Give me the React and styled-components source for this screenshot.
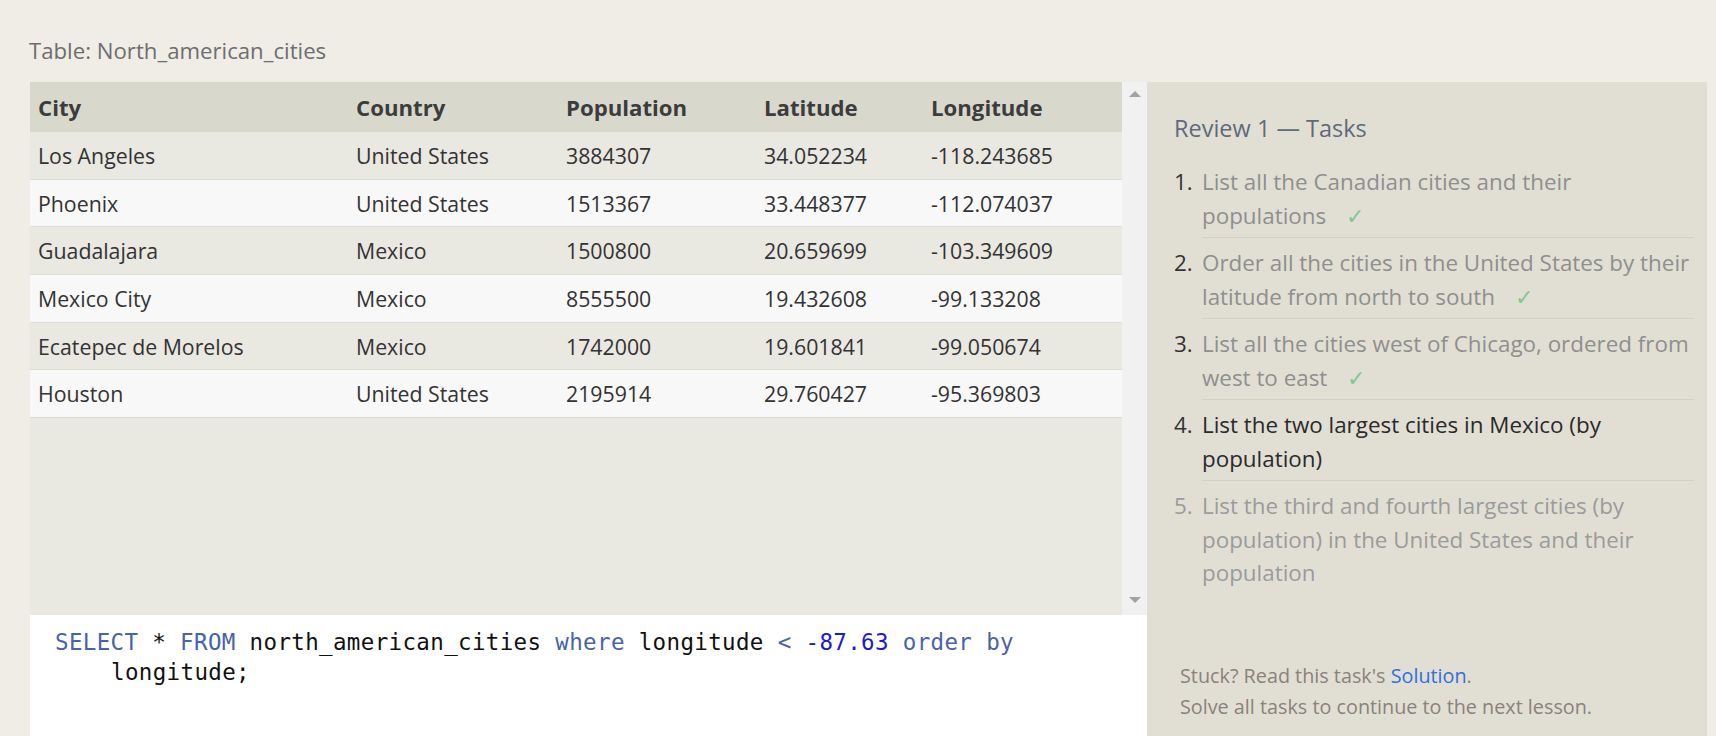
import React from "react";
import styled, { createGlobalStyle } from "styled-components";

const rows = [
  ["Los Angeles", "United States", "3884307", "34.052234", "-118.243685"],
  ["Phoenix", "United States", "1513367", "33.448377", "-112.074037"],
  ["Guadalajara", "Mexico", "1500800", "20.659699", "-103.349609"],
  ["Mexico City", "Mexico", "8555500", "19.432608", "-99.133208"],
  ["Ecatepec de Morelos", "Mexico", "1742000", "19.601841", "-99.050674"],
  ["Houston", "United States", "2195914", "29.760427", "-95.369803"],
];

const columns = ["City", "Country", "Population", "Latitude", "Longitude"];

// state: done, active, todo
const tasks = [
  { text: "List all the Canadian cities and their populations", state: "done" },
  {
    text: "Order all the cities in the United States by their latitude from north to south",
    state: "done",
  },
  {
    text: "List all the cities west of Chicago, ordered from west to east",
    state: "done",
  },
  { text: "List the two largest cities in Mexico (by population)", state: "active" },
  {
    text: "List the third and fourth largest cities (by population) in the United States and their population",
    state: "todo",
  },
];

function App() {
  return (
    <>
      <GlobalStyle />
      <Page>
        <TableTitle>Table: North_american_cities</TableTitle>
        <Workspace>
          <LeftColumn>
            <ResultsPane>
              <Results>
                <HeaderRow>
                  {columns.map((c) => (
                    <HeadCell key={c}>{c}</HeadCell>
                  ))}
                </HeaderRow>
                {rows.map((row, i) => (
                  <Row key={row[0]} $odd={i % 2 === 0}>
                    {row.map((cell, j) => (
                      <Cell key={j}>{cell}</Cell>
                    ))}
                  </Row>
                ))}
              </Results>
              <Scrollbar>
                <Arrow $dir="up" />
                <Arrow $dir="down" />
              </Scrollbar>
            </ResultsPane>
            <Editor>
              <CodeLine>
                <Kw>SELECT</Kw> * <Kw>FROM</Kw> north_american_cities <Kw>where</Kw>{" "}
                longitude <Kw>&lt;</Kw> <Num>-87.63</Num> <Kw>order by</Kw>
              </CodeLine>
              <CodeLine $wrapped>longitude;</CodeLine>
            </Editor>
          </LeftColumn>

          <TaskPanel>
            <TaskHeading>Review 1 — Tasks</TaskHeading>
            <TaskList>
              {tasks.map((t, i) => (
                <TaskItem key={i}>
                  <TaskNum $state={t.state}>{i + 1}.</TaskNum>
                  <TaskText $state={t.state} $last={i === tasks.length - 1}>
                    {t.text}
                    {t.state === "done" && <Check>✓</Check>}
                  </TaskText>
                </TaskItem>
              ))}
            </TaskList>
            <Footer>
              <div>
                Stuck? Read this task's <SolutionLink href="#">Solution</SolutionLink>.
              </div>
              <div>Solve all tasks to continue to the next lesson.</div>
            </Footer>
          </TaskPanel>
        </Workspace>
      </Page>
    </>
  );
}

export default App;

const GlobalStyle = createGlobalStyle`
  html, body {
    margin: 0;
    padding: 0;
    background: #efede6;
    overflow: hidden;
  }
  body {
    font-family: "Open Sans", "Noto Sans", sans-serif;
  }
`;

const Page = styled.div`
  height: 736px;
  padding: 35px 9px 0 30px;
  box-sizing: border-box;
  display: flex;
  flex-direction: column;
`;

const TableTitle = styled.div`
  font-size: 22.2px;
  line-height: 32px;
  color: #6e6e6e;
  margin-bottom: 15px;
  margin-left: -1px;
`;

const Workspace = styled.div`
  flex: 1;
  display: flex;
  min-height: 0;
`;

const LeftColumn = styled.div`
  width: 1117px;
  display: flex;
  flex-direction: column;
`;

const ResultsPane = styled.div`
  height: 533px;
  display: flex;
  background: #e9e8e1;
`;

const Results = styled.div`
  flex: 1;
  display: flex;
  flex-direction: column;
  color: #333;
  font-size: 21.3px;
`;

const grid = `
  display: grid;
  grid-template-columns: 318px 210px 198px 167px 1fr;
`;

const HeaderRow = styled.div`
  ${grid};
  height: 50px;
  align-items: center;
  background: #d9d8cc;
`;

const HeadCell = styled.div`
  padding-left: 8px;
  font-weight: 700;
  font-size: 22.2px;
  color: #3c3c3c;
`;

const Row = styled.div`
  ${grid};
  height: 46.7px;
  align-items: center;
  border-bottom: 1px solid #dcdbd4;
  background: ${(p) => (p.$odd ? "#e9e8e1" : "#f8f8f8")};
`;

const Cell = styled.div`
  padding-left: 8px;
  white-space: nowrap;
`;

const Scrollbar = styled.div`
  width: 25px;
  background: #f1f1f1;
  display: flex;
  flex-direction: column;
  justify-content: space-between;
  align-items: center;
  padding: 9px 0 12px;
  box-sizing: border-box;
`;

const Arrow = styled.div`
  width: 0;
  height: 0;
  border-left: 6px solid transparent;
  border-right: 6px solid transparent;
  ${(p) =>
    p.$dir === "up"
      ? "border-bottom: 6px solid #a3a3a3;"
      : "border-top: 6px solid #a3a3a3;"}
`;

const Editor = styled.div`
  flex: 1;
  background: #ffffff;
  padding: 12px 25px;
  font-family: "DejaVu Sans Mono", "Liberation Mono", monospace;
  font-size: 22.5px;
  letter-spacing: 0.35px;
  line-height: 30px;
  color: #111;
`;

const CodeLine = styled.div`
  white-space: pre;
  padding-left: ${(p) => (p.$wrapped ? "56px" : "0")};
`;

const Kw = styled.span`
  color: #4a62a8;
`;

const Num = styled.span`
  color: #1c1cc8;
`;

const TaskPanel = styled.div`
  flex: 1;
  background: #e1dfd4;
  padding: 30px 13px 14px 27px;
  display: flex;
  flex-direction: column;
`;

const TaskHeading = styled.div`
  font-size: 23.5px;
  line-height: 32px;
  color: #5f6a79;
  margin-bottom: 21px;
`;

const TaskList = styled.ol`
  list-style: none;
  margin: 0;
  padding: 0;
`;

const TaskItem = styled.li`
  display: flex;
  font-size: 22.4px;
  line-height: 33.5px;
`;

const TaskNum = styled.span`
  width: 28px;
  flex-shrink: 0;
  color: ${(p) => (p.$state === "todo" ? "#9b9b9b" : "#333")};
`;

const taskColors = {
  done: "#8f8f8f",
  active: "#2a2a2a",
  todo: "#9b9b9b",
};

const TaskText = styled.span`
  flex: 1;
  color: ${(p) => taskColors[p.$state]};
  padding-bottom: 5px;
  margin-bottom: 8px;
  border-bottom: ${(p) => (p.$last ? "none" : "1px solid #d3d1c6")};
`;

const Check = styled.span`
  color: #7cc98f;
  margin-left: 20px;
`;

const Footer = styled.div`
  margin-top: auto;
  padding-left: 6px;
  font-size: 19.8px;
  line-height: 31px;
  color: #8a827b;
`;

const SolutionLink = styled.a`
  color: #2f6fde;
  text-decoration: none;
`;
